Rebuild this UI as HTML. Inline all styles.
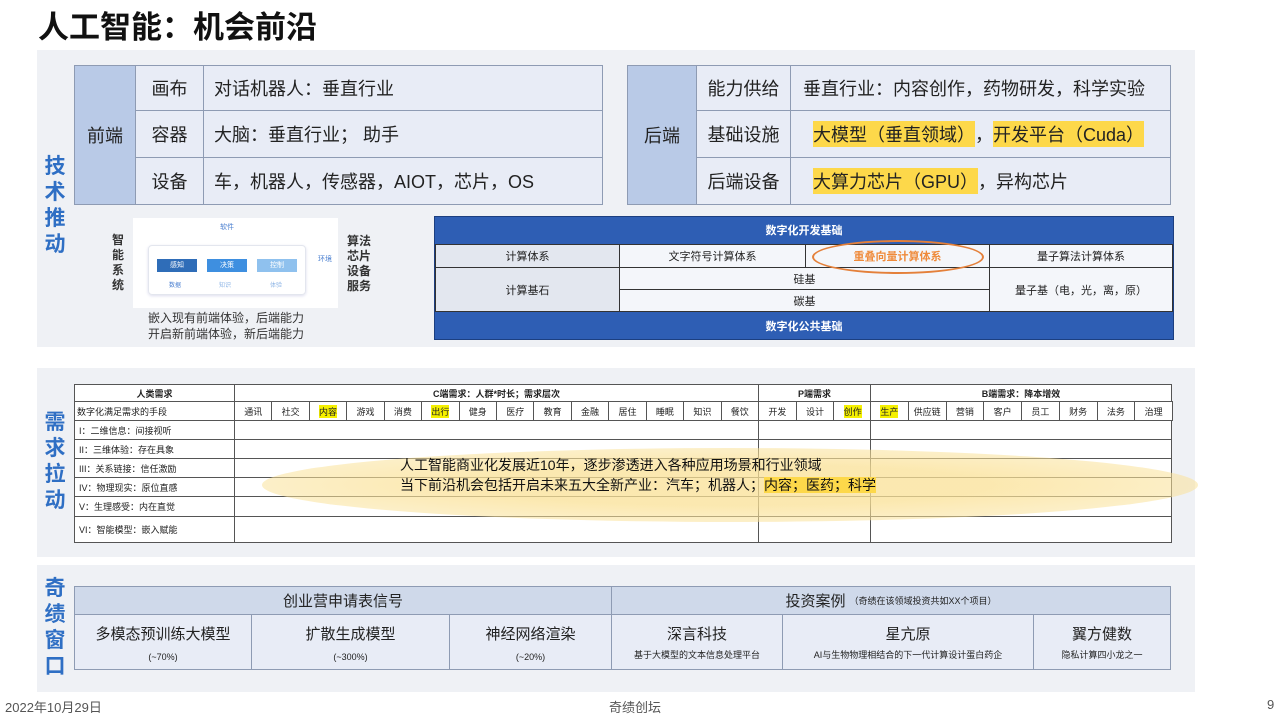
<!DOCTYPE html>
<html><head><meta charset="utf-8"><style>
*{margin:0;padding:0;box-sizing:border-box}
body{width:1282px;height:722px;background:#fff;position:relative;overflow:hidden;font-family:"Liberation Sans","Noto Sans CJK SC",sans-serif;color:#222}
.a{position:absolute}
.p{position:absolute;background:#eff1f5}
.c{position:absolute;display:flex;align-items:center;justify-content:center;border:1px solid #8e9bb3;white-space:nowrap}
.vl{position:absolute;color:#2f6fc4;font-size:21px;line-height:26px;width:24px;text-align:center;font-weight:bold}
.hl{background:#fdd84a}
.t2 .c{font-size:18px}
.mt .c{border:1px solid #555;font-size:9px;background:#fff}
.y{background:#f5f000}
</style></head><body>
<div class="a" style="left:38px;top:2px;font-size:31px;font-weight:bold;color:#111">人工智能：机会前沿</div>

<div class="p" style="left:37px;top:50px;width:1158px;height:297px"></div>
<div class="p" style="left:37px;top:368px;width:1158px;height:189px"></div>
<div class="p" style="left:37px;top:565px;width:1158px;height:127px"></div>

<div class="vl" style="left:43px;top:154px">技<br>术<br>推<br>动</div>
<div class="vl" style="left:43px;top:410px">需<br>求<br>拉<br>动</div>
<div class="vl" style="left:43px;top:576px">奇<br>绩<br>窗<br>口</div>

<div class="t2">
<div class="c" style="left:74px;top:65px;width:62px;height:140px;background:#b9cae7">前端</div>
<div class="c" style="left:135px;top:65px;width:69px;height:46px;background:#e8ecf6">画布</div>
<div class="c" style="left:135px;top:110px;width:69px;height:48px;background:#e8ecf6">容器</div>
<div class="c" style="left:135px;top:157px;width:69px;height:48px;background:#e8ecf6">设备</div>
<div class="c" style="left:203px;top:65px;width:400px;height:46px;background:#e8ecf6;justify-content:flex-start;padding-left:10px">对话机器人：垂直行业</div>
<div class="c" style="left:203px;top:110px;width:400px;height:48px;background:#e8ecf6;justify-content:flex-start;padding-left:10px">大脑：垂直行业；&nbsp;助手</div>
<div class="c" style="left:203px;top:157px;width:400px;height:48px;background:#e8ecf6;justify-content:flex-start;padding-left:10px">车，机器人，传感器，AIOT，芯片，OS</div>

<div class="c" style="left:627px;top:65px;width:70px;height:140px;background:#b9cae7">后端</div>
<div class="c" style="left:696px;top:65px;width:95px;height:46px;background:#e8ecf6">能力供给</div>
<div class="c" style="left:696px;top:110px;width:95px;height:48px;background:#e8ecf6">基础设施</div>
<div class="c" style="left:696px;top:157px;width:95px;height:48px;background:#e8ecf6">后端设备</div>
<div class="c" style="left:790px;top:65px;width:381px;height:46px;background:#e8ecf6;justify-content:flex-start;padding-left:12px">垂直行业：内容创作，药物研发，科学实验</div>
<div class="c" style="left:790px;top:110px;width:381px;height:48px;background:#e8ecf6;justify-content:flex-start;padding-left:22px"><span class="hl">大模型（垂直领域）</span>，<span class="hl">开发平台（Cuda）</span></div>
<div class="c" style="left:790px;top:157px;width:381px;height:48px;background:#e8ecf6;justify-content:flex-start;padding-left:22px"><span class="hl">大算力芯片（GPU）</span>，异构芯片</div>
</div>

<div class="a" style="left:133px;top:218px;width:205px;height:90px;background:#fff"></div>
<div class="a" style="left:148px;top:245px;width:158px;height:50px;border:1px solid #e3e6ee;border-radius:4px;box-shadow:0 1px 3px #dde"></div>
<div class="a" style="left:220px;top:222px;font-size:7px;color:#4a7fd0">软件</div>
<div class="a" style="left:157px;top:259px;width:40px;height:13px;background:#2f6db8;color:#fff;font-size:7px;text-align:center;line-height:13px">感知</div>
<div class="a" style="left:207px;top:259px;width:40px;height:13px;background:#3e8fe0;color:#fff;font-size:7px;text-align:center;line-height:13px">决策</div>
<div class="a" style="left:257px;top:259px;width:40px;height:13px;background:#8fc1ee;color:#fff;font-size:7px;text-align:center;line-height:13px">控制</div>
<div class="a" style="left:169px;top:280px;font-size:6px;color:#4a7fd0">数据</div>
<div class="a" style="left:219px;top:280px;font-size:6px;color:#8fb6e6">知识</div>
<div class="a" style="left:270px;top:280px;font-size:6px;color:#8fb6e6">体验</div>
<div class="a" style="left:318px;top:254px;font-size:7px;color:#4a7fd0">环境</div>
<div class="a" style="left:112px;top:233px;font-size:12px;line-height:15px;width:14px;font-weight:bold;color:#333">智<br>能<br>系<br>统</div>
<div class="a" style="left:347px;top:234px;font-size:12px;line-height:15px;font-weight:bold;color:#333">算法<br>芯片<br>设备<br>服务</div>
<div class="a" style="left:148px;top:310px;font-size:12px;line-height:16px;color:#333">嵌入现有前端体验，后端能力<br>开启新前端体验，新后端能力</div>

<div class="a" style="left:434px;top:216px;width:740px;height:124px;background:#2e5eb4;border:1px solid #1c3f80"></div>
<div class="a" style="left:434px;top:222px;width:740px;text-align:center;color:#fff;font-size:11px;font-weight:bold">数字化开发基础</div>
<div class="a" style="left:434px;top:318px;width:740px;text-align:center;color:#fff;font-size:11px;font-weight:bold">数字化公共基础</div>
<div style="font-size:11px">
<div class="c" style="left:435px;top:244px;width:185px;height:24px;background:#e3e7ef;border-color:#333">计算体系</div>
<div class="c" style="left:619px;top:244px;width:187px;height:24px;background:#f4f6fa;border-color:#333">文字符号计算体系</div>
<div class="c" style="left:805px;top:244px;width:185px;height:24px;background:#f4f6fa;border-color:#333;color:#ef8a3a;font-weight:bold">重叠向量计算体系</div>
<div class="c" style="left:989px;top:244px;width:184px;height:24px;background:#f4f6fa;border-color:#333">量子算法计算体系</div>
<div class="c" style="left:435px;top:267px;width:185px;height:45px;background:#e3e7ef;border-color:#333">计算基石</div>
<div class="c" style="left:619px;top:267px;width:371px;height:23px;background:#f4f6fa;border-color:#333">硅基</div>
<div class="c" style="left:619px;top:289px;width:371px;height:23px;background:#f4f6fa;border-color:#333">碳基</div>
<div class="c" style="left:989px;top:267px;width:184px;height:45px;background:#f4f6fa;border-color:#333">量子基（电，光，离，原）</div>
</div>
<div class="a" style="left:812px;top:240px;width:172px;height:34px;border:2px solid #e4803a;border-radius:50%"></div>

<div class="mt">
<div class="a" style="left:74px;top:384px;width:1098px;height:159px;background:#fff;border:1px solid #555"></div>
<div class="c" style="left:74px;top:384px;width:161px;height:18px;font-weight:bold">人类需求</div>
<div class="c" style="left:234px;top:384px;width:525px;height:18px;font-weight:bold">C端需求：人群*时长；需求层次</div>
<div class="c" style="left:758px;top:384px;width:113px;height:18px;font-weight:bold">P端需求</div>
<div class="c" style="left:870px;top:384px;width:302px;height:18px;font-weight:bold">B端需求：降本增效</div>
<div class="c" style="left:74px;top:401px;width:161px;height:20px;justify-content:flex-start;padding-left:2px">数字化满足需求的手段</div>
<div class="c" style="left:74px;top:420px;width:161px;height:20px;justify-content:flex-start;padding-left:4px">I：二维信息：间接视听</div>
<div class="c" style="left:74px;top:439px;width:161px;height:20px;justify-content:flex-start;padding-left:4px">II：三维体验：存在具象</div>
<div class="c" style="left:74px;top:458px;width:161px;height:20px;justify-content:flex-start;padding-left:4px">III：关系链接：信任激励</div>
<div class="c" style="left:74px;top:477px;width:161px;height:20px;justify-content:flex-start;padding-left:4px">IV：物理现实：原位直感</div>
<div class="c" style="left:74px;top:496px;width:161px;height:21px;justify-content:flex-start;padding-left:4px">V：生理感受：内在直觉</div>
<div class="c" style="left:74px;top:516px;width:161px;height:27px;justify-content:flex-start;padding-left:4px">VI：智能模型：嵌入赋能</div>
<div class="a" style="left:234px;top:420px;width:938px;height:20px;border-bottom:1px solid #555"></div>
<div class="a" style="left:234px;top:439px;width:938px;height:20px;border-bottom:1px solid #555"></div>
<div class="a" style="left:234px;top:458px;width:938px;height:20px;border-bottom:1px solid #555"></div>
<div class="a" style="left:234px;top:477px;width:938px;height:20px;border-bottom:1px solid #555"></div>
<div class="a" style="left:234px;top:496px;width:938px;height:21px;border-bottom:1px solid #555"></div>
<div class="a" style="left:758px;top:401px;width:113px;height:142px;border-left:1px solid #555;border-right:1px solid #555"></div>
</div>
<div class="mt" id="cells"></div>
<div class="a" style="left:262px;top:448px;width:936px;height:74px;border-radius:50%;background:radial-gradient(ellipse at center,rgba(250,225,150,.75) 40%,rgba(250,225,150,.45) 80%,rgba(250,225,150,0) 100%)"></div>
<div class="a" style="left:400px;top:455px;font-size:14px;line-height:20px;color:#111">人工智能商业化发展近10年，逐步渗透进入各种应用场景和行业领域<br>当下前沿机会包括开启未来五大全新产业：汽车；机器人；<span class="hl">内容；医药；科学</span></div>

<div style="font-size:15px">
<div class="c" style="left:74px;top:586px;width:538px;height:29px;background:#cfd9ea">创业营申请表信号</div>
<div class="c" style="left:611px;top:586px;width:560px;height:29px;background:#cfd9ea">投资案例<span style="font-size:9px;margin-left:4px">（奇绩在该领域投资共如XX个项目）</span></div>
<div class="c" style="left:74px;top:614px;width:178px;height:56px;background:#e8ecf6;flex-direction:column">多模态预训练大模型<span style="font-size:9px;margin-top:8px">(~70%)</span></div>
<div class="c" style="left:251px;top:614px;width:199px;height:56px;background:#e8ecf6;flex-direction:column">扩散生成模型<span style="font-size:9px;margin-top:8px">(~300%)</span></div>
<div class="c" style="left:449px;top:614px;width:163px;height:56px;background:#e8ecf6;flex-direction:column">神经网络渲染<span style="font-size:9px;margin-top:8px">(~20%)</span></div>
<div class="c" style="left:611px;top:614px;width:172px;height:56px;background:#e8ecf6;flex-direction:column">深言科技<span style="font-size:9px;margin-top:4px">基于大模型的文本信息处理平台</span></div>
<div class="c" style="left:782px;top:614px;width:252px;height:56px;background:#e8ecf6;flex-direction:column">星亢原<span style="font-size:9px;margin-top:4px">AI与生物物理相结合的下一代计算设计蛋白药企</span></div>
<div class="c" style="left:1033px;top:614px;width:138px;height:56px;background:#e8ecf6;flex-direction:column">翼方健数<span style="font-size:9px;margin-top:4px">隐私计算四小龙之一</span></div>
</div>

<div class="a" style="left:5px;top:697px;font-size:13px;color:#555">2022年10月29日</div>
<div class="a" style="left:609px;top:697px;font-size:13px;color:#555">奇绩创坛</div>
<div class="a" style="left:1267px;top:697px;font-size:13px;color:#555">9</div>

<script>
var html='';
function row(x0,x1,arr){var w=(x1-x0)/arr.length;arr.forEach(function(t,i){var h=t[0]=='*';if(h)t=t.slice(1);html+='<div class="c" style="left:'+(x0+i*w)+'px;top:401px;width:'+(w+1)+'px;height:20px"><span'+(h?' class="y"':'')+'>'+t+'</span></div>';});}
row(234,758,['通讯','社交','*内容','游戏','消费','*出行','健身','医疗','教育','金融','居住','睡眠','知识','餐饮']);
row(758,871,['开发','设计','*创作']);
row(870,1172,['*生产','供应链','营销','客户','员工','财务','法务','治理']);
document.getElementById('cells').innerHTML=html;
</script>
</body></html>
